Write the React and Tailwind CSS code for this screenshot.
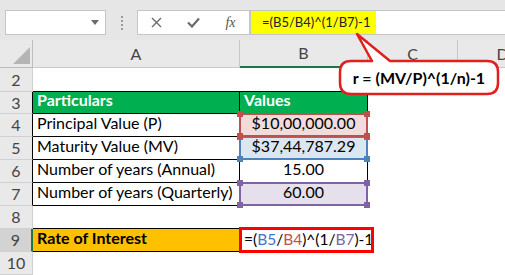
import React from 'react';

const font = { fontFamily: 'Lato, "Liberation Sans", sans-serif' };

// Excel-style range outline with the little square handles
const RangeBox = ({ color, z }) => (
  <div className={`pointer-events-none absolute -inset-px border-2 ${color.border} ${z}`}>
    <span className={`absolute -left-[4px] -top-[4px] h-[6px] w-[6px] ${color.bg}`} />
    <span className={`absolute -right-[4px] -top-[4px] h-[6px] w-[6px] ${color.bg}`} />
    <span className={`absolute -left-[4px] -bottom-[4px] h-[6px] w-[6px] ${color.bg}`} />
    <span className={`absolute -right-[4px] -bottom-[4px] h-[6px] w-[6px] ${color.bg}`} />
  </div>
);

const red = { border: 'border-[#c0504d]', bg: 'bg-[#c0504d]' };
const blue = { border: 'border-[#4f81bd]', bg: 'bg-[#4f81bd]' };
const purple = { border: 'border-[#8064a2]', bg: 'bg-[#8064a2]' };

function Toolbar() {
  return (
    <div className="flex h-[40px] items-start bg-[#e6e6e6] pl-[5px] pt-[10px]">
      <div className="flex h-[25px] w-[101px] items-center justify-end border border-[#c6c6c6] bg-white pr-[6px]">
        <svg width="8" height="5" viewBox="0 0 8 5"><path d="M0 0h8L4 5z" fill="#6b6b6b" /></svg>
      </div>
      <div className="flex h-[25px] w-[31px] flex-col items-center justify-center gap-[2px]">
        <span className="h-[2px] w-[2px] bg-[#9a9a9a]" />
        <span className="h-[2px] w-[2px] bg-[#9a9a9a]" />
        <span className="h-[2px] w-[2px] bg-[#9a9a9a]" />
        <span className="h-[2px] w-[2px] bg-[#9a9a9a]" />
      </div>
      <div className="flex h-[25px] w-[113px] items-center border border-[#c6c6c6] bg-white">
        <div className="flex w-[37px] justify-center">
          <svg width="11" height="11" viewBox="0 0 11 11"><path d="M1 1l9 9M10 1l-9 9" stroke="#6b6b6b" strokeWidth="1.4" /></svg>
        </div>
        <div className="flex w-[37px] justify-center">
          <svg width="13" height="11" viewBox="0 0 13 11"><path d="M1 5.5l4 4L12 1.5" stroke="#6b6b6b" strokeWidth="2.2" fill="none" /></svg>
        </div>
        <div className="flex w-[37px] justify-center text-[14px] italic text-[#555]" style={{ fontFamily: '"Liberation Serif", serif' }}>
          fx
        </div>
      </div>
      <div className="flex h-[25px] flex-1 items-stretch border-y border-l border-[#c6c6c6] bg-white">
        <div className="flex w-[125px] items-center whitespace-nowrap bg-[#ffff00] pl-[11px] text-[13px] text-[#222]">
          =(B5/B4)^(1/B7)-1
        </div>
      </div>
    </div>
  );
}

function RowHead({ n, dark, selected }) {
  const edge = selected ? 'border-r-2 border-r-[#217346] bg-[#d3d3d3]' : dark ? 'border-r-black bg-[#e9e9e9]' : 'bg-[#e9e9e9]';
  return (
    <div className={`flex items-center justify-center border-b border-r border-[#d0d0d0] text-[16px] text-[#444] ${edge}`}>
      {n}
    </div>
  );
}

function Sheet() {
  const hdr = 'flex items-center justify-center border-b border-r border-[#c8c8c8] bg-[#e9e9e9] text-[16px] text-[#444]';
  const cell = 'flex items-end whitespace-nowrap px-[4px] pb-[1px] text-[16px] text-black';
  const box = 'border-b border-r border-black';
  return (
    <div className="grid grid-cols-[33px_207px_128px_90px_90px] grid-rows-[28px_24px_22px_repeat(7,23px)]">
      {/* column headers */}
      <div className="relative border-b border-r border-[#bdbdbd] bg-[#e9e9e9]">
        <svg className="absolute bottom-[3px] right-[2px]" width="17" height="17" viewBox="0 0 17 17"><path d="M17 0v17H0z" fill="#b5b5b5" /></svg>
      </div>
      <div className={hdr}>A</div>
      <div className={`${hdr} border-b-2 border-b-[#217346] bg-[#d3d3d3] text-[#2b4b3a]`}>B</div>
      <div className={hdr}>C</div>
      <div className={hdr}>D</div>

      {/* row 2 */}
      <RowHead n={2} />
      <div className="border-b border-black" />
      <div className="border-b border-black" />
      <div className="col-span-2" />

      {/* row 3 */}
      <RowHead n={3} dark />
      <div className={`${cell} ${box} bg-[#00b050] font-bold text-white`}>Particulars</div>
      <div className={`${cell} ${box} bg-[#00b050] font-bold text-white`}>Values</div>
      <div className="col-span-2" />

      {/* row 4 */}
      <RowHead n={4} dark />
      <div className={`${cell} ${box}`}>Principal Value (P)</div>
      <div className={`${cell} ${box} relative justify-center bg-[#f2dcdb]`}>
        $10,00,000.00
        <RangeBox color={red} z="z-30" />
      </div>
      <div className="col-span-2" />

      {/* row 5 */}
      <RowHead n={5} dark />
      <div className={`${cell} ${box}`}>Maturity Value (MV)</div>
      <div className={`${cell} ${box} relative justify-center bg-[#dce6f1]`}>
        $37,44,787.29
        <RangeBox color={blue} z="z-20" />
      </div>
      <div className="col-span-2" />

      {/* row 6 */}
      <RowHead n={6} dark />
      <div className={`${cell} ${box}`}>Number of years (Annual)</div>
      <div className={`${cell} ${box} justify-center`}>15.00</div>
      <div className="col-span-2" />

      {/* row 7 */}
      <RowHead n={7} dark />
      <div className={`${cell} ${box}`}>Number of years (Quarterly)</div>
      <div className={`${cell} ${box} relative justify-center bg-[#e6e0ec]`}>
        60.00
        <RangeBox color={purple} z="z-20" />
      </div>
      <div className="col-span-2" />

      {/* row 8 */}
      <RowHead n={8} />
      <div className="border-b border-black" />
      <div className="col-span-3" />

      {/* row 9 */}
      <RowHead n={9} selected />
      <div className={`${cell} ${box} bg-[#ffc000] font-bold`}>Rate of Interest</div>
      <div className="relative z-10 flex items-end whitespace-nowrap pb-[1px] pl-[4px] text-[15.5px] text-black">
        <span>
          =(<span className="text-[#4472c4]">B5</span>/<span className="text-[#c0504d]">B4</span>)^(1/<span className="text-[#8064a2]">B7</span>)-1
        </span>
        <div className="pointer-events-none absolute -bottom-px -left-px -right-[6px] -top-[2px] border-[3px] border-[#ff0000]" />
      </div>
      <div className="col-span-2" />

      {/* row 10 */}
      <RowHead n={10} />
      <div className="col-span-4" />
    </div>
  );
}

function Callout() {
  return (
    <>
      <svg className="pointer-events-none absolute left-0 top-0 z-40" width="505" height="275" viewBox="0 0 505 275">
        <path
          d="M351 61 L372 61 L357 34 L390 61 L487 61 Q498 61 498 72 L498 83 Q498 94 487 94 L351 94 Q340 94 340 83 L340 72 Q340 61 351 61 Z"
          fill="#fff"
          stroke="#e0201e"
          strokeWidth="2.5"
          strokeLinejoin="round"
        />
      </svg>
      <div className="pointer-events-none absolute left-[340px] top-[61px] z-50 flex h-[33px] w-[158px] items-center justify-center text-[16px] font-bold text-black">
        r = (MV/P)^(1/n)-1
      </div>
    </>
  );
}

export default function App() {
  return (
    <div className="relative h-[275px] w-[505px] overflow-hidden bg-white" style={font}>
      <Toolbar />
      <Sheet />
      <Callout />
    </div>
  );
}
